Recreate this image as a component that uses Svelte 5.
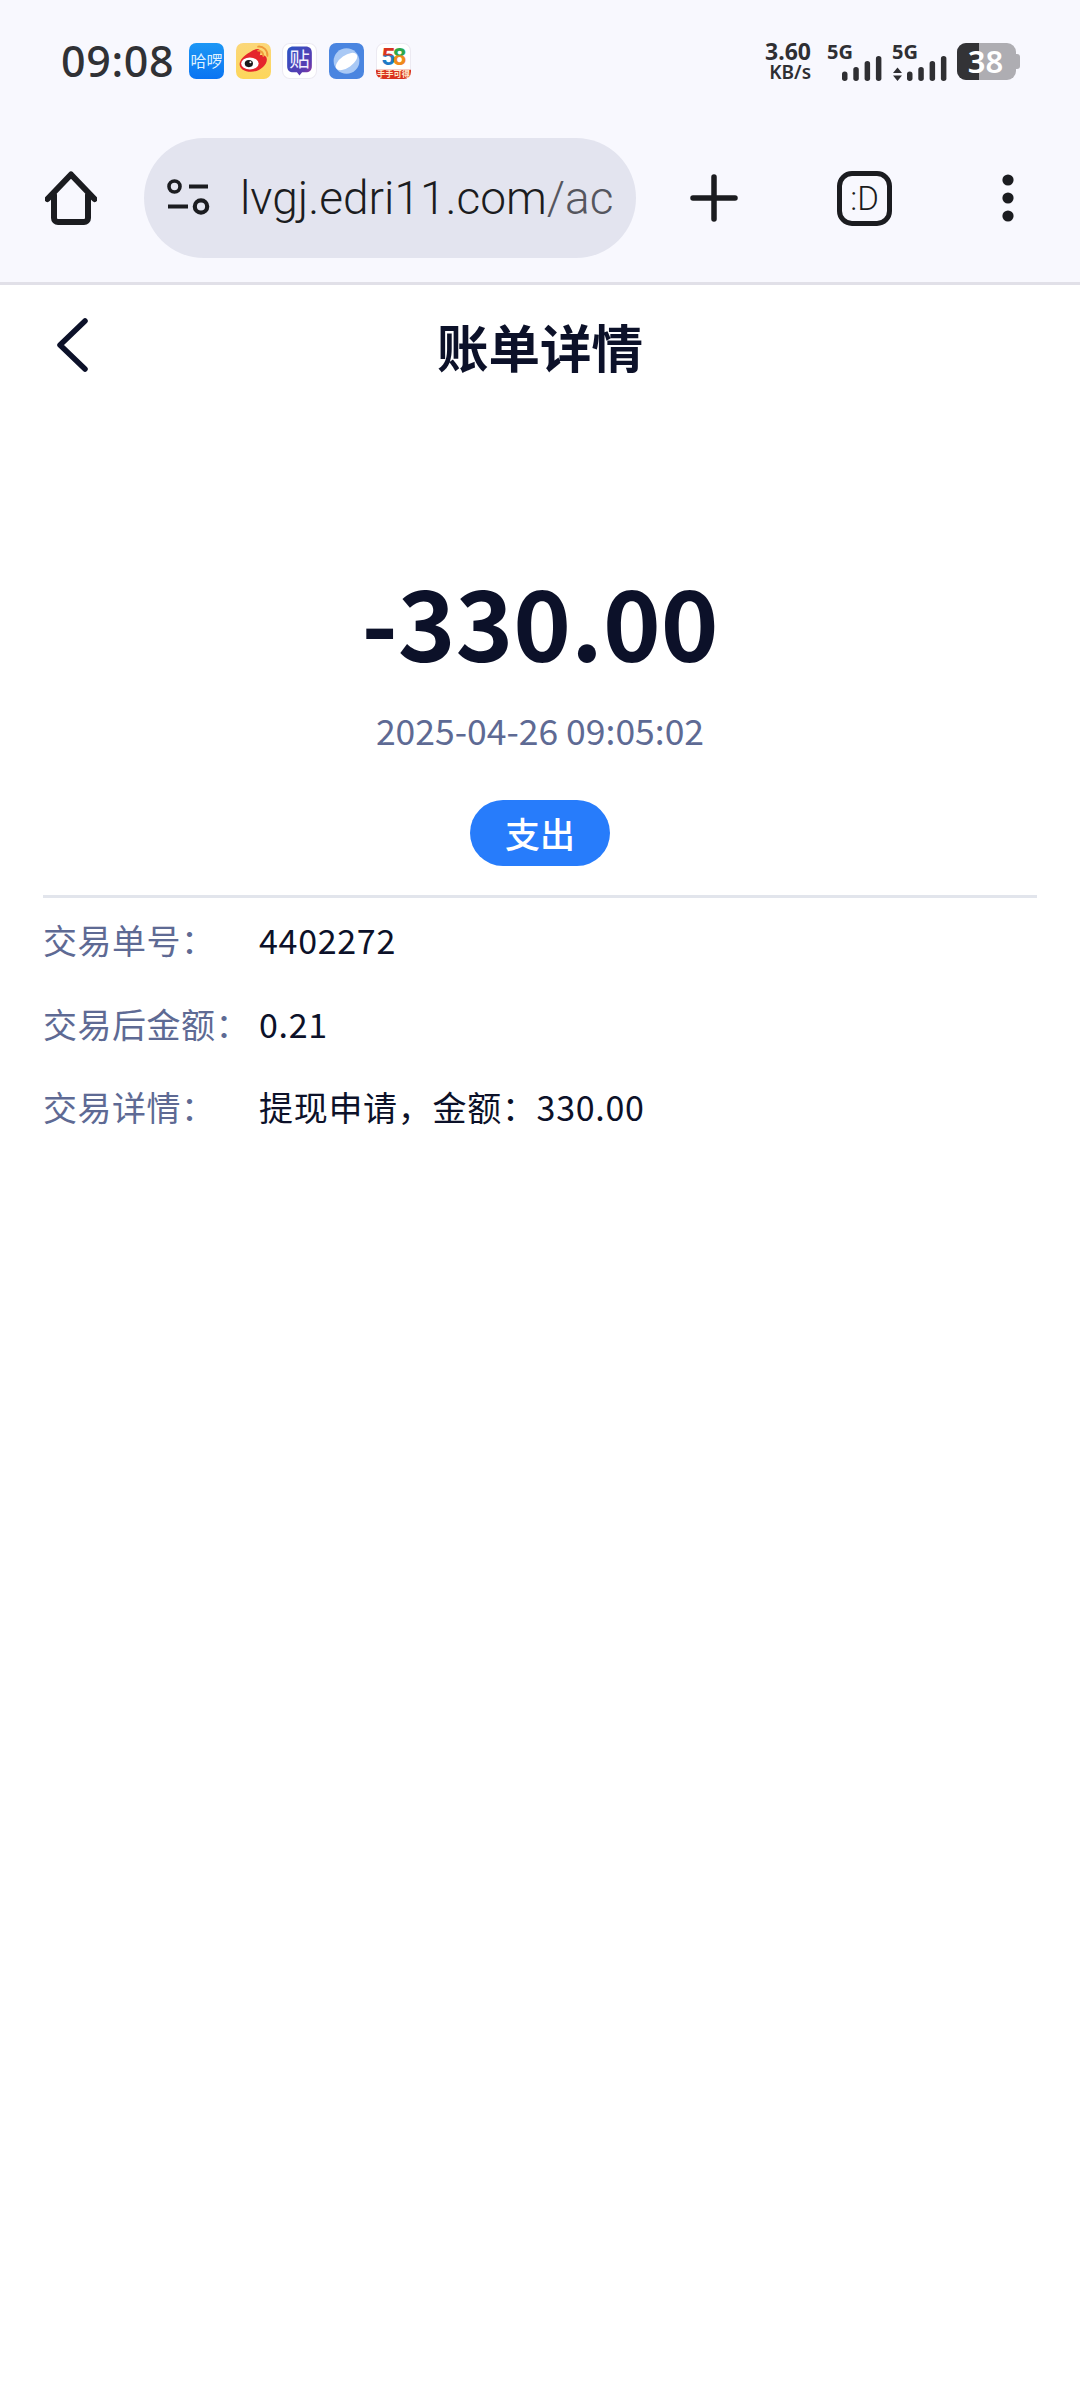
<script>
  const rows = [
    { label: "交易单号：", value: "4402272" },
    { label: "交易后金额：", value: "0.21" },
    { label: "交易详情：", value: "提现申请，金额：330.00" }
  ];
  const bars = [[0, 70.5], [11.3, 66], [22.6, 60], [33.9, 55]];
</script>

<div class="chrome">
  <div class="status">
    <span class="time">09:08</span>
    <div class="apps">
      <svg width="35" height="36" viewBox="0 0 34 35">
        <defs>
          <linearGradient id="hb" x1="0" y1="0" x2="0" y2="1"><stop offset="0" stop-color="#1c97f5" /><stop offset="1" stop-color="#0a74f2" /></linearGradient>
        </defs>
        <rect width="34" height="35" rx="7" fill="url(#hb)" />
        <text x="17" y="23" text-anchor="middle" font-size="15.5" fill="#dff1ff" class="cjk">哈啰</text>
      </svg>
      <svg width="35" height="36" viewBox="0 0 34 35">
        <defs>
          <linearGradient id="wb" x1="0" y1="0" x2="0" y2="1"><stop offset="0" stop-color="#fbd77a" /><stop offset="1" stop-color="#fdd65a" /></linearGradient>
        </defs>
        <rect width="34" height="35" rx="7" fill="url(#wb)" />
        <path d="M13.500 9c4.500-3.500 9-4 10-1.500.6 1.500 0 3.300-.5 4.500 3.500-1 7 .5 7 4 0 6-7.500 12-15.500 12-6.500 0-11-3.200-11-7.400 0-3.600 4-8.600 10-11.600z" fill="#e5262c" />
        <ellipse cx="13.500" cy="20" rx="8.500" ry="5.800" fill="#fff" />
        <ellipse cx="12.500" cy="20" rx="4" ry="3.500" fill="#1a1a1a" />
        <circle cx="14" cy="18.800" r="1" fill="#fff" />
        <path d="M21.500 3.500c5-.5 9.500 3.500 9 9M21.500 7.500c2.700-.3 5.300 2 5 5" fill="none" stroke="#f0993a" stroke-width="1.800" stroke-linecap="round" />
      </svg>
      <svg width="35" height="36" viewBox="0 0 34 35">
        <defs>
          <linearGradient id="tb" x1="0" y1="0" x2="1" y2="1"><stop offset="0" stop-color="#2a56c6" /><stop offset=".75" stop-color="#5b3ab0" /><stop offset="1" stop-color="#a23a9c" /></linearGradient>
        </defs>
        <rect x=".5" y=".5" width="33" height="34" rx="7" fill="#fff" stroke="#eceaf2" />
        <path d="M11 3.500h12c3.800 0 6 2.200 6 6v13c0 3.800-2.200 6-6 6h-3.500L17 31.500 14.500 28.500H11c-3.800 0-6-2.200-6-6v-13c0-3.800 2.200-6 6-6z" fill="url(#tb)" />
        <text x="17" y="23" text-anchor="middle" font-size="20" fill="#f2f0ff" class="cjk">贴</text>
      </svg>
      <svg width="35" height="36" viewBox="0 0 34 35">
        <rect width="34" height="35" rx="7" fill="#4a85e0" />
        <circle cx="17" cy="17.5" r="12.5" fill="#a9c9f5" />
        <ellipse cx="17" cy="18" rx="12" ry="6" transform="rotate(-35 17 18)" fill="#fff" />
      </svg>
      <svg width="35" height="36" viewBox="0 0 34 35">
        <defs>
          <linearGradient id="five" x1="0" y1="0" x2="0" y2="1"><stop offset=".45" stop-color="#d9331f" /><stop offset=".5" stop-color="#1f7ac6" /></linearGradient>
          <linearGradient id="eight" x1="0" y1="0" x2="0" y2="1"><stop offset=".45" stop-color="#2da74a" /><stop offset=".5" stop-color="#ef8b1c" /></linearGradient>
        </defs>
        <rect x=".5" y=".5" width="33" height="34" rx="7" fill="#fff" stroke="#eceaf2" />
        <path d="M0 26h34v2a7 7 0 0 1-7 7H7a7 7 0 0 1-7-7z" fill="#d9331f" />
        <text x="12" y="21" text-anchor="middle" font-size="24" font-weight="700" fill="url(#five)" class="num">5</text>
        <text x="23" y="21" text-anchor="middle" font-size="24" font-weight="700" fill="url(#eight)" class="num">8</text>
        <text x="17" y="33.5" text-anchor="middle" font-size="8" font-weight="700" fill="#ffe9c9" class="cjk">手手可得</text>
      </svg>
    </div>
    <div class="sys">
      <div class="speed"><b>3.60</b><span>KB/s</span></div>
      <svg class="signal" width="58" height="52" viewBox="825 34 58 52">
        <text x="827" y="58" class="five">5G</text>
        {#each bars as b}
          <rect x={842 + b[0]} y={b[1]} width="5.5" height={80 - b[1]} rx="2.700" fill="#2f2f33" />
        {/each}
      </svg>
      <svg class="signal" width="57" height="52" viewBox="890 34 57 52">
        <text x="892" y="58" class="five">5G</text>
        <path d="M897.500 66.500l4.500 5.500h-9zM897.500 80l-4.500-5.500h9z" fill="#2f2f33" />
        {#each bars as b}
          <rect x={907 + b[0]} y={b[1]} width="5.5" height={80 - b[1]} rx="2.700" fill="#2f2f33" />
        {/each}
      </svg>
      <div class="battery">
        <div class="level"></div>
        <span>38</span>
      </div>
    </div>
  </div>

  <div class="toolbar">
    <svg class="home" width="52" height="54" viewBox="0 0 52 54">
      <path d="M2.500 28 26 3.500 49.500 28M9 24v23a4 4 0 0 0 4 4h26a4 4 0 0 0 4-4V24" fill="none" stroke="#1b1c20" stroke-width="6" stroke-linecap="round" stroke-linejoin="round" />
    </svg>
    <div class="pill">
      <svg width="44" height="38" viewBox="0 0 44 38">
        <circle cx="8.500" cy="7.500" r="5.500" fill="none" stroke="#1b1c20" stroke-width="3.600" />
        <path d="M23 7.500h19M2 27.500h20" stroke="#1b1c20" stroke-width="4.200" fill="none" />
        <circle cx="35" cy="27.500" r="6.200" fill="none" stroke="#1b1c20" stroke-width="4.200" />
      </svg>
      <div class="url"><span class="host">lvgj.edri11.com</span><span class="path">/ac</span></div>
    </div>
    <svg class="plus" width="48" height="48" viewBox="0 0 48 48">
      <path d="M24 3v42M3 24h42" stroke="#1b1c20" stroke-width="5.5" stroke-linecap="round" />
    </svg>
    <div class="tab">:D</div>
    <svg class="dots" width="12" height="48" viewBox="0 0 12 48">
      <circle cx="6" cy="6" r="5.600" fill="#1b1c20" />
      <circle cx="6" cy="24" r="5.600" fill="#1b1c20" />
      <circle cx="6" cy="42" r="5.600" fill="#1b1c20" />
    </svg>
  </div>
</div>

<main>
  <header>
    <svg width="34" height="54" viewBox="0 0 34 54">
      <path d="M30 3 5 27l25 24" fill="none" stroke="#0c1129" stroke-width="5.5" stroke-linecap="round" stroke-linejoin="round" />
    </svg>
    <h1>账单详情</h1>
  </header>

  <section class="summary">
    <div class="amount">-330.00</div>
    <div class="date">2025-04-26 09:05:02</div>
    <div class="badge">支出</div>
  </section>

  <dl>
    {#each rows as row}
      <div class="row">
        <dt>{row.label}</dt>
        <dd>{row.value}</dd>
      </div>
    {/each}
  </dl>
</main>

<style>
  :global(body) {
    background: #fff;
  }

  .chrome {
    background: #f8f8fe;
    border-bottom: 3px solid #e1e0e8;
    height: 282px;
    font-family: Roboto, "Noto Sans", sans-serif;
  }

  .status {
    display: flex;
    align-items: center;
    height: 42px;
    padding: 40px 0 0 61px;
  }

  .time {
    font-family: "Noto Sans", Roboto, sans-serif;
    font-size: 43px;
    font-weight: 500;
    line-height: 42px;
    color: #303135;
    width: 128px;
    letter-spacing: .6px;
  }

  .apps {
    display: flex;
    gap: 11.7px;
    height: 36px;
  }

  .apps svg {
    display: block;
  }

  .cjk {
    font-family: "Noto Sans CJK SC", sans-serif;
  }

  .num {
    font-family: Roboto, sans-serif;
  }

  .sys {
    margin-left: auto;
    margin-right: 64px;
    display: flex;
    align-items: center;
    height: 38px;
    color: #2f2f33;
  }

  .speed {
    display: flex;
    flex-direction: column;
    align-items: flex-end;
    width: 46px;
    margin-right: 14px;
    font-family: "Noto Sans", sans-serif;
  }

  .speed b {
    font-size: 23px;
    line-height: 22px;
    font-weight: 700;
  }

  .speed span {
    font-size: 19px;
    line-height: 20px;
    font-weight: 600;
  }

  .signal {
    display: block;
    margin-right: 7px;
    flex: none;
  }

  .signal + .signal {
    margin-right: 10px;
  }

  .five {
    font-family: "Noto Sans", sans-serif;
    font-size: 20px;
    font-weight: 700;
    fill: #2f2f33;
  }

  .battery {
    position: relative;
    width: 59px;
    height: 37px;
    border-radius: 9px;
    background: #aeadb2;
    font-family: "Noto Sans", sans-serif;
    display: flex;
    align-items: center;
    justify-content: center;
    flex: none;
  }

  .battery::after {
    content: "";
    position: absolute;
    right: -4px;
    top: 11px;
    width: 4px;
    height: 15px;
    border-radius: 0 3px 3px 0;
    background: #aeadb2;
  }

  .level {
    position: absolute;
    left: 0;
    top: 0;
    bottom: 0;
    width: 22px;
    border-radius: 9px 0 0 9px;
    background: #333336;
  }

  .battery span {
    position: relative;
    font-size: 31px;
    font-weight: 600;
    color: #fff;
    line-height: 37px;
    margin-right: 2px;
  }

  .toolbar {
    display: flex;
    align-items: center;
    height: 120px;
    margin-top: 56px;
    padding-left: 45px;
  }

  .toolbar svg {
    display: block;
    flex: none;
  }

  .pill {
    width: 492px;
    height: 120px;
    margin-left: 47px;
    border-radius: 60px;
    background: #e3e4ef;
    display: flex;
    align-items: center;
    padding-left: 22px;
    box-sizing: border-box;
    flex: none;
  }

  .url {
    width: 380px;
    margin-left: 30px;
    overflow: hidden;
    white-space: nowrap;
    font-size: 46px;
    font-weight: 300;
    line-height: 64px;
  }

  .host {
    color: #1b1c20;
  }

  .path {
    color: #55565e;
  }

  .plus {
    margin-left: 54px;
  }

  .tab {
    width: 55px;
    height: 55px;
    margin-left: 99px;
    box-sizing: border-box;
    border: 5.5px solid #1b1c20;
    border-radius: 15px;
    display: flex;
    align-items: center;
    justify-content: center;
    font-size: 33px;
    font-weight: 300;
    color: #1b1c20;
    flex: none;
  }

  .dots {
    margin-left: 110px;
  }

  main {
    font-family: "Noto Sans CJK SC", "Noto Sans", sans-serif;
    padding: 0 43px;
  }

  header {
    position: relative;
    height: 120px;
    display: flex;
    align-items: center;
    justify-content: center;
  }

  header svg {
    position: absolute;
    left: 12px;
    top: 33px;
  }

  h1 {
    margin: 0;
    font-size: 51.5px;
    font-weight: 700;
    color: #0c1129;
  }

  .summary {
    display: flex;
    flex-direction: column;
    align-items: center;
    padding-top: 149px;
    border-bottom: 3px solid #e2e5ec;
    padding-bottom: 29px;
  }

  .amount {
    font-size: 98px;
    font-weight: 700;
    line-height: 130px;
    color: #0c1129;
  }

  .date {
    margin-top: 20px;
    font-size: 35.5px;
    line-height: 52px;
    color: #5e6a94;
  }

  .badge {
    margin-top: 44px;
    width: 140px;
    height: 66px;
    border-radius: 33px;
    background: #277cfb;
    color: #fff;
    font-size: 35px;
    font-weight: 500;
    line-height: 66px;
    text-align: center;
  }

  dl {
    margin: 0;
  }

  .row {
    display: flex;
    height: 83.5px;
    align-items: center;
    font-size: 34px;
    letter-spacing: .5px;
  }

  dt {
    width: 216px;
    color: #5e6a94;
  }

  dd {
    margin: 0;
    color: #0c1129;
    letter-spacing: .7px;
  }
</style>
